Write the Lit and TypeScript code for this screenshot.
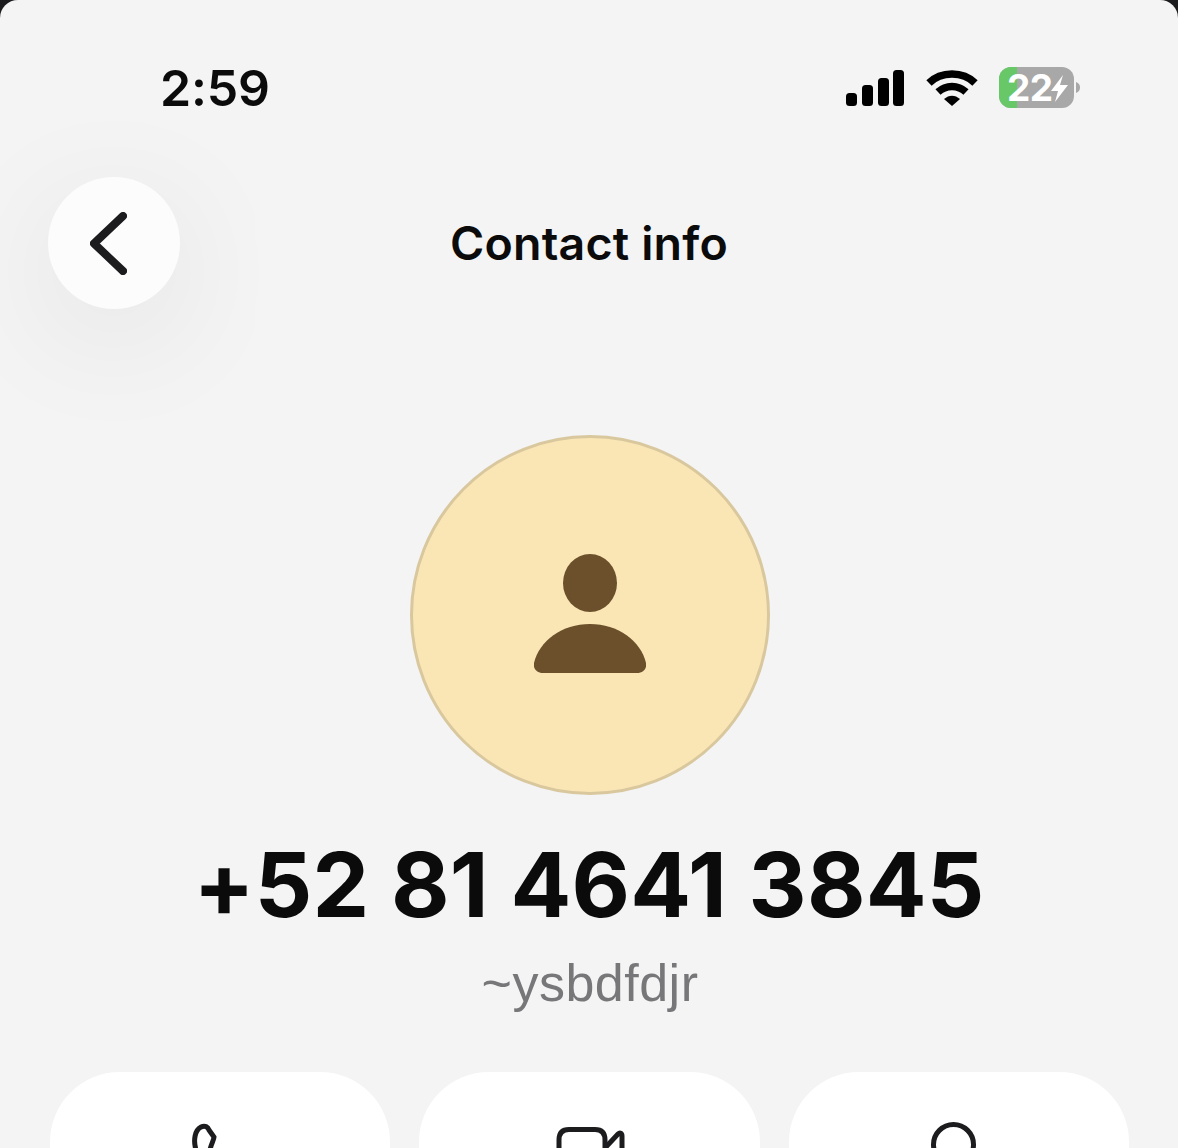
import { LitElement, html, css } from "lit";
import { customElement } from "lit/decorators.js";

@customElement("app-root")
export class AppRoot extends LitElement {
  static styles = css`
    :host { display: block; width: 1178px; height: 1148px; overflow: hidden; background: #1c1c1e; font-family: Inter, "Liberation Sans", sans-serif; color: #0b0b0b; }
    .screen { height: 1148px; background: #f4f4f4; border-radius: 18px 18px 0 0; display: flex; flex-direction: column; align-items: center; overflow: hidden; }
    .screen > * { flex-shrink: 0; }
    .status { align-self: stretch; height: 70px; margin-top: 53px; padding: 0 96px 0 160px; display: flex; justify-content: space-between; align-items: center; }
    .time { font-size: 50px; font-weight: 600; line-height: 70px; letter-spacing: -0.2px; }
    .sys { display: flex; align-items: center; }
    .sys svg { display: block; }
    .wifi { margin-left: 21px; }
    .battery { margin-left: 21px; position: relative; width: 83px; height: 42px; }
    .battery span { position: absolute; left: 8px; top: 0; font: 700 37px/42px Inter, sans-serif; color: #fff; letter-spacing: -0.5px; }
    .nav { align-self: stretch; height: 132px; margin-top: 54px; padding: 0 48px; display: grid; grid-template-columns: 132px 1fr 132px; align-items: center; }
    .back { width: 132px; height: 132px; border-radius: 50%; background: #fcfcfc; box-shadow: 0 28px 130px rgba(0,0,0,.08); display: flex; align-items: center; justify-content: center; }
    .back svg { margin-right: 11px; }
    .title { text-align: center; font-size: 46.5px; font-weight: 600; line-height: 56px; letter-spacing: 0.2px; }
    .avatar { margin: 126px 0 0 2px; width: 360px; height: 360px; box-sizing: border-box; border-radius: 50%; background: #fae6b5; border: 3px solid #d9c79e; display: flex; align-items: center; justify-content: center; padding-bottom: 2px; }
    .phone { margin-top: 42px; font-size: 90px; font-weight: 700; line-height: 96px; letter-spacing: 0.25px; white-space: nowrap; }
    .name { margin: 22px 0 0 2px; font: 400 52px/56px "Liberation Sans", sans-serif; color: #77777a; letter-spacing: 0.5px; }
    .actions { align-self: stretch; margin-top: 61px; padding: 0 49px 0 50px; display: grid; grid-template-columns: repeat(3, 1fr); column-gap: 29px; }
    .card { height: 240px; background: #fff; border-radius: 70px; display: flex; justify-content: center; padding-top: 50px; box-sizing: border-box; }
    .card svg { display: block; }
  `;

  render() {
    return html`
      <div class="screen">
        <div class="status">
          <div class="time">2:59</div>
          <div class="sys">
            <svg width="60" height="38" viewBox="0 0 60 38" fill="#000">
              <rect x="1" y="24" width="11" height="13" rx="3.5"/>
              <rect x="17" y="16" width="11" height="21" rx="3.5"/>
              <rect x="33" y="9" width="11" height="28" rx="3.5"/>
              <rect x="48" y="1" width="11" height="36" rx="3.5"/>
            </svg>
            <svg class="wifi" width="52" height="38" viewBox="0 0 52 38" fill="none" stroke="#000" stroke-width="7.5">
              <path d="M3 14 C15 2 37 2 49 14"/>
              <path d="M12 23 C20 15.5 32 15.5 40 23"/>
              <path d="M18 30 L26 37 L34 30 C29 25.5 23 25.5 18 30Z" fill="#000" stroke="none"/>
            </svg>
            <div class="battery">
              <svg width="83" height="42" viewBox="0 0 83 42">
                <rect x="0" y="0" width="75" height="41" rx="12" fill="#a8a8a8"/>
                <path d="M12 0 H18 V41 H12 A12 12 0 0 1 0 29 V12 A12 12 0 0 1 12 0Z" fill="#68c868"/>
                <path d="M77 15 C80 16 81 18 81 20.500 C81 23 80 25 77 26Z" fill="#a8a8a8"/>
                <path d="M64 8 L52 24 H59 L56 35 L69 18 H61Z" fill="#fff"/>
              </svg>
              <span>22</span>
            </div>
          </div>
        </div>
        <div class="nav">
          <div class="back">
            <svg width="37" height="63" viewBox="0 0 37 63" fill="none" stroke="#1c1c1e" stroke-width="8" stroke-linecap="round" stroke-linejoin="round">
              <path d="M33 4 L4 31.500 L33 59"/>
            </svg>
          </div>
          <div class="title">Contact info</div>
          <div></div>
        </div>
        <div class="avatar">
          <svg width="112" height="120" viewBox="0 0 112 120" fill="#6b502b">
            <ellipse cx="56" cy="29" rx="27" ry="29"/>
            <path d="M56 70 C28 70 5 87 0 109 C-1 115 3 119 9 119 H103 C109 119 113 115 112 109 C107 87 84 70 56 70Z"/>
          </svg>
        </div>
        <div class="phone">+52 81 4641 3845</div>
        <div class="name">~ysbdfdjr</div>
        <div class="actions">
          <div class="card">
            <svg width="60" height="60" viewBox="0 0 60 60" fill="none" stroke="#1c1c1e" stroke-width="5">
              <path d="M6 28 C3 18 5 8 11 5 C15 3 18 5 19 8 L24 15 C24 18 21 22 20 28"/>
            </svg>
          </div>
          <div class="card">
            <svg width="72" height="60" viewBox="0 0 72 60" fill="none" stroke="#1c1c1e" stroke-width="5">
              <path d="M6 60 V18 C6 11 9 7.500 16 7.500 H42 C49 7.500 52 11 52 18 V60"/>
              <path d="M52 26 L65 12 C67 10 69 11 69 14 V60"/>
            </svg>
          </div>
          <div class="card">
            <svg width="58" height="60" viewBox="0 0 58 60" fill="none" stroke="#1c1c1e" stroke-width="5">
              <circle cx="23.500" cy="22.500" r="20"/>
            </svg>
          </div>
        </div>
      </div>
    `;
  }
}
